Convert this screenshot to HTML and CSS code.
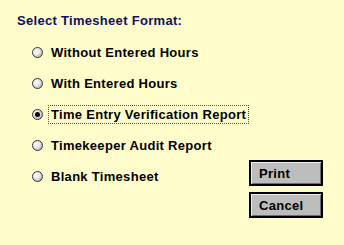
FILE: index.html
```html
<!DOCTYPE html>
<html>
<head>
<meta charset="utf-8">
<link rel="stylesheet" href="styles.css">
</head>
<body>
<div class="dialog">
  <div class="heading">Select Timesheet Format:</div>
  <div class="main">
    <ul class="options">
      <li class="option"><span class="radio"></span><span class="label">Without Entered Hours</span></li>
      <li class="option"><span class="radio"></span><span class="label">With Entered Hours</span></li>
      <li class="option"><span class="radio checked"></span><span class="label focus">Time Entry Verification Report</span></li>
      <li class="option"><span class="radio"></span><span class="label">Timekeeper Audit Report</span></li>
      <li class="option"><span class="radio"></span><span class="label">Blank Timesheet</span></li>
    </ul>
    <div class="buttons">
      <button class="btn">Print</button>
      <button class="btn">Cancel</button>
    </div>
  </div>
</div>
</body>
</html>
```
FILE: styles.css
```css
html, body {
  margin: 0;
  padding: 0;
  background: #fffdcc;
}
.dialog {
  width: 344px;
  height: 245px;
  box-sizing: border-box;
  padding: 13px 0 0 17px;
  font-family: "Liberation Sans", Arial, sans-serif;
  font-weight: bold;
  font-size: 13px;
  letter-spacing: 0.3px;
  color: #000;
}
.heading {
  color: #101060;
  height: 15px;
  line-height: 15px;
}
.main {
  display: flex;
}
.options {
  list-style: none;
  margin: 9px 0 0 0;
  padding: 0 0 0 15px;
  width: 217px;
  flex: none;
  white-space: nowrap;
}
.option {
  display: flex;
  align-items: center;
  height: 31px;
}
.radio {
  width: 9px;
  height: 9px;
  border: 1px solid #333;
  border-radius: 50%;
  background: radial-gradient(circle at 35% 35%, #ffffff 0%, #e4e4e4 45%, #9a9a9a 100%);
  margin-right: 7px;
  flex: none;
  display: flex;
  align-items: center;
  justify-content: center;
}
.radio.checked::after {
  content: "";
  width: 5px;
  height: 5px;
  border-radius: 50%;
  background: #000;
}
.label {
  line-height: 15px;
  padding: 1px 2px;
  margin-left: -2px;
  border: 1px dotted transparent;
}
.label.focus {
  border-color: #555;
}
.buttons {
  display: flex;
  flex-direction: column;
  gap: 6px;
  margin-top: 132px;
}
.btn {
  width: 74px;
  height: 26px;
  box-sizing: border-box;
  border: 2px solid #000;
  background: #bdbdbd;
  box-shadow: inset 1px 1px 0 #eeeeee, inset -1px -1px 0 #6e6e6e;
  font-family: inherit;
  font-weight: bold;
  font-size: 13px;
  letter-spacing: 0.3px;
  text-align: left;
  padding: 0 0 0 8px;
  color: #000;
}
```
